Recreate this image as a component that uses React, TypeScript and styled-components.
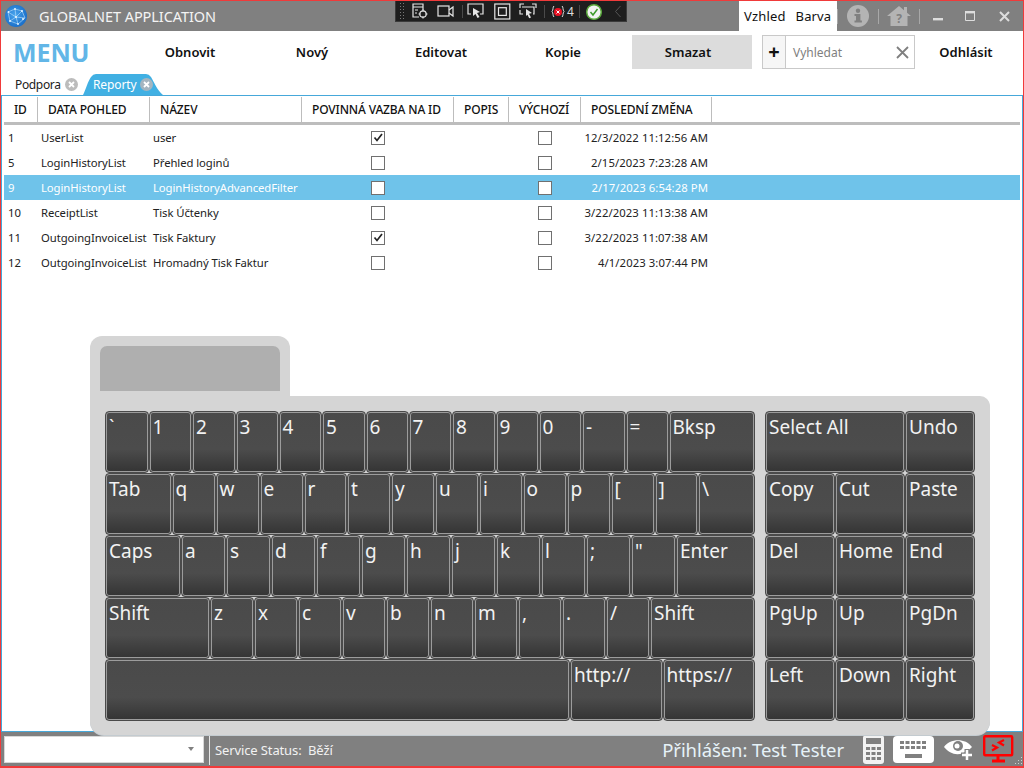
import React from "react";
import styled, { createGlobalStyle } from "styled-components";

const Global = createGlobalStyle`
  html, body { margin: 0; padding: 0; background: #fff; }
  * { box-sizing: border-box; }
  body { font-family: "Noto Sans", "Open Sans", sans-serif; }
`;
const Win = styled.div`
  position: relative; width: 1024px; height: 768px; border: 1px solid #f03a3a; border-bottom-width: 2px;
  display: flex; flex-direction: column; overflow: hidden; background: #fff; color: #111;
`;
const TitleBar = styled.div`
  height: 30px; background: #808080; display: flex; align-items: center; flex: none;
`;
const Logo = styled.svg`margin-left: 4px; flex: none;`;
const AppTitle = styled.div`
  margin-left: 12px; color: #f4f4f4; font-size: 14.5px; letter-spacing: -.07px; flex: 1; white-space: nowrap;
`;
const Theme = styled.div`
  background: #fff; height: 30px; width: 98px; display: flex; align-items: center; gap: 10px;
  padding-left: 5px; font-size: 13px; letter-spacing: .15px; color: #111; white-space: nowrap; flex: none;
`;
const Sep = styled.div`width: 1px; height: 15px; background: #a8a8a8; flex: none;`;
const TitleIcon = styled.div<{ $w: number }>`
  width: ${p => p.$w}px; height: 30px; display: flex; align-items: center; justify-content: center; flex: none;
`;
const DevBar = styled.div`
  position: absolute; left: 394px; top: 0; width: 232px; height: 21px; background: #1e1e1e;
  display: flex; align-items: center; border: 1px solid #3a3a3a; border-top: 0; color: #ddd; font-size: 12px;
`;
const DevIcon = styled.svg<{ $l: number }>`position: absolute; left: ${p => p.$l}px; top: 2px;`;
const DevText = styled.span`position: absolute; left: 171px; top: 2px; color: #ddd; font-size: 12px;`;
const DevSep = styled.i<{ $l: number }>`position: absolute; left: ${p => p.$l}px; top: 4px; width: 1px; height: 13px; background: #4a4a4a;`;
const Dots = styled.i`position: absolute; left: 3px; top: 1px; width: 6px; height: 18px;
  background-image: radial-gradient(#777 .6px, transparent .7px); background-size: 3px 3px;`;

const MenuBar = styled.div`height: 42px; display: flex; align-items: center; flex: none; padding-left: 12px;`;
const MenuTitle = styled.div`
  width: 117px; font-size: 25px; font-weight: 700; color: #62b6e7; letter-spacing: -.1px; line-height: 34px;
`;
const MenuBtn = styled.div<{ $w: number; $active?: boolean }>`
  width: ${p => p.$w}px; height: 34px; display: flex; align-items: center; justify-content: center; flex: none;
  font-size: 13px; font-weight: 600; color: #111; background: ${p => (p.$active ? "#dcdcdc" : "transparent")};
  padding-right: ${p => (p.$active ? 8 : 0)}px; margin-left: ${p => (p.$active ? 14 : 0)}px;
`;
const Search = styled.div`
  margin-left: 10px; width: 153px; height: 34px; border: 1px solid #c9c9c9; display: flex; flex: none;
`;
const Plus = styled.div`
  width: 23px; background: #f6f6f6; border-right: 1px solid #c9c9c9; font-size: 20px; font-weight: 700;
  display: flex; align-items: center; justify-content: center; line-height: 1; color: #111;
`;
const SearchText = styled.div`
  flex: 1; padding-left: 7px; font-size: 12px; color: #808080; display: flex; align-items: center; justify-content: space-between; padding-right: 5px;
`;
const TabStrip = styled.div`height: 22px; display: flex; align-items: flex-end; flex: none; padding-left: 14px;`;
const Tab = styled.div`
  display: flex; align-items: center; height: 21px; font-size: 12px; letter-spacing: -.35px; gap: 4px; color: #222; width: 67px; white-space: nowrap;
`;
const ActiveTab = styled(Tab)`
  position: relative; width: 80px; padding-left: 10px; color: #fff; z-index: 0; margin-left: 1px; gap: 3px; letter-spacing: -.1px;
  &::before { content: ""; position: absolute; inset: 0; z-index: -1; background: #41b0e3;
    clip-path: path("M0 21 C3 15 5 7 8 3 Q10 0 13 0 H63 Q66 0 68 3 C71 8 74 16 80 21 Z"); }
`;
const CloseIcon = styled.svg`flex: none;`;
const Grid = styled.div`
  flex: 1; border: 1px solid #46a8da; padding: 1px 2px 0 2px; min-height: 0;
`;
const HeaderRow = styled.div`
  height: 28px; display: flex; border-bottom: 3px solid #bdbdbd;
`;
const HeadCell = styled.div<{ $w: number }>`
  width: ${p => p.$w}px; flex: none; height: 25px; border-right: 1px solid #bdbdbd; font-size: 12px; font-weight: 500; letter-spacing: -.15px;
  display: flex; align-items: center; padding-left: 10px; color: #111; white-space: nowrap;
`;
const Row = styled.div<{ $sel?: boolean }>`
  height: 25px; display: flex; align-items: center; font-size: 11.3px; letter-spacing: -.07px;
  background: ${p => (p.$sel ? "#6fc3ea" : "transparent")}; color: ${p => (p.$sel ? "#fff" : "#222")};
`;
const Cell = styled.div<{ $w: number; $pad?: number; $center?: boolean; $right?: boolean }>`
  width: ${p => p.$w}px; flex: none; white-space: nowrap; overflow: visible;
  padding-left: ${p => p.$pad ?? 0}px;
  padding-right: ${p => (p.$right ? 1 : 0)}px;
  text-align: ${p => (p.$right ? "right" : "left")};
  letter-spacing: ${p => (p.$right ? ".08px" : "inherit")};
  display: ${p => (p.$center ? "flex" : "block")}; justify-content: center;
`;
const Check = styled.div`
  width: 14px; height: 14px; border: 1px solid #707070; background: #fff; display: flex; align-items: center; justify-content: center;
`;
const StatusBar = styled.div`
  height: 34px; background: #808080; display: flex; align-items: center; flex: none; padding-left: 3px; color: #f2f2f2;
`;
const Combo = styled.div`
  width: 200px; height: 27px; background: #fff; display: flex; align-items: center; justify-content: flex-end; padding-right: 9px; flex: none;
  border: 1px solid #d8d8d8;
`;
const Caret = styled.i`width: 0; height: 0; border: 3.5px solid transparent; border-top: 4px solid #808080; border-bottom: 0;`;
const StatusSep = styled.div`width: 1px; height: 32px; background: #e8e8e8; margin-left: 5px; flex: none;`;
const Service = styled.div`margin: 1px 0 0 5px; font-size: 13px; letter-spacing: -.12px; flex: 1; white-space: nowrap;`;
const User = styled.div`font-size: 18.5px; color: #e6f2f8; letter-spacing: -.08px; white-space: nowrap; margin-right: 19px;`;
const StatusIcons = styled.div`display: flex; align-items: center; gap: 9px; margin-right: 9px; position: relative;`;
const Grip = styled.i`position: absolute; right: -8px; bottom: -3px; width: 11px; height: 11px;
  background-image: radial-gradient(#d0d0d0 .8px, transparent .9px); background-size: 3px 3px;
  clip-path: polygon(100% 0, 100% 100%, 0 100%);`;

const Keyboard = styled.div`position: absolute; left: 89px; top: 335px; width: 900px; display: flex; flex-direction: column;`;
const KbTab = styled.div`
  width: 200px; height: 60px; background: #d5d5d5; border-radius: 12px 12px 0 0; padding: 10px 10px 5px;
`;
const KbTabInner = styled.div`height: 45px; background: #afafaf; border-radius: 7px 7px 0 0;`;
const KbBody = styled.div`
  height: 339px; background: #d5d5d5; border-radius: 0 10px 14px 14px; padding: 15px 15px 14px;
  display: flex; gap: 10px; box-shadow: 0 1px 0 #c3cbd0;
`;
const KeyBlock = styled.div<{ $w: number }>`width: ${p => p.$w}px; flex: none; display: flex; flex-direction: column;`;
const KeyRow = styled.div`height: 62px; display: flex; flex: none;`;
const Key = styled.div<{ $w: number }>`
  width: ${p => p.$w}px; flex: none; height: 62px; border: 1px solid #4a4a4a; border-radius: 4px;
  box-shadow: inset 0 0 0 1px #9c9c9c;
  background: linear-gradient(#4a4a4a 0, #4c4c4c 62%, #343434 100%);
  color: #f2f2f2; font-size: 19px; line-height: 26px; padding: 2px 0 0 3px; white-space: nowrap; overflow: hidden;
`;

const icon = { fill: "none", stroke: "#e6e6e6", strokeWidth: 1.2 };
const Box = () => (
  <svg width="10" height="9" viewBox="0 0 10 9"><path d="M1.5 4.5l2.5 3 5-6.500" fill="none" stroke="#222" strokeWidth="1.7" /></svg>
);
const TabClose = ({ c }: { c: string }) => (
  <CloseIcon width="13" height="13" viewBox="0 0 13 13">
    <circle cx="6.5" cy="6.5" r="6.500" fill={c} />
    <path d="M4 4l5 5M9 4l-5 5" stroke="#fff" strokeWidth="1.800" />
  </CloseIcon>
);
const cols = [34, 112, 152, 152, 55, 72, 131];
const heads = ["ID", "DATA POHLED", "NÁZEV", "POVINNÁ VAZBA NA ID", "POPIS", "VÝCHOZÍ", "POSLEDNÍ ZMĚNA"];
const rows = [
  ["1", "UserList", "user", true, "12/3/2022 11:12:56 AM"],
  ["5", "LoginHistoryList", "Přehled loginů", false, "2/15/2023 7:23:28 AM"],
  ["9", "LoginHistoryList", "LoginHistoryAdvancedFilter", false, "2/17/2023 6:54:28 PM"],
  ["10", "ReceiptList", "Tisk Účtenky", false, "3/22/2023 11:13:38 AM"],
  ["11", "OutgoingInvoiceList", "Tisk Faktury", true, "3/22/2023 11:07:38 AM"],
  ["12", "OutgoingInvoiceList", "Hromadný Tisk Faktur", false, "4/1/2023 3:07:44 PM"],
] as const;
type K = [string, number];
const mainKeys: K[][] = [
  [["`", 43.5], ...["1","2","3","4","5","6","7","8","9","0","-","="].map((k, i): K => [k, i % 3 === 2 ? 43 : 43.5]), ["Bksp", 86.5]],
  [["Tab", 66.5], ...["q","w","e","r","t","y","u","i","o","p","[","]"].map((k, i): K => [k, i % 4 === 3 ? 43.5 : 44]), ["\\", 56.5]],
  [["Caps", 76], ...["a","s","d","f","g","h","j","k","l",";","\""].map((k): K => [k, 45]), ["Enter", 79]],
  [["Shift", 105], ...["z","x","c","v","b","n","m",",",".","/"].map((k): K => [k, 44]), ["Shift", 105]],
  [["", 465], ["http://", 92.5], ["https://", 92.5]],
];
const sideKeys: K[][] = [
  [["Select All", 140], ["Undo", 70]],
  [["Copy", 70], ["Cut", 70], ["Paste", 70]],
  [["Del", 70], ["Home", 70], ["End", 70]],
  [["PgUp", 70], ["Up", 70], ["PgDn", 70]],
  [["Left", 70], ["Down", 70], ["Right", 70]],
];
const KeyGroup = ({ data, w }: { data: K[][]; w: number }) => (
  <KeyBlock $w={w}>
    {data.map((r, i) => (
      <KeyRow key={i}>
        {r.map(([t, kw], j) => <Key key={j} $w={kw}>{t}</Key>)}
      </KeyRow>
    ))}
  </KeyBlock>
);

export default function App() {
  return (
    <Win>
      <Global />
      <TitleBar>
        <Logo width="22" height="22" viewBox="0 0 22 22">
          <defs>
            <radialGradient id="g" cx=".45" cy=".45" r=".65"><stop offset="0" stopColor="#4aa6ee" /><stop offset="1" stopColor="#1266c4" /></radialGradient>
          </defs>
          <circle cx="11" cy="11" r="11" fill="url(#g)" />
          <path d="M3 7L10 4L17 6L20 13L13 19L5 16ZM10 4L11 12L17 6M11 12L5 16M11 12L13 19M11 12L20 13M3 7L11 12" fill="none" stroke="#bfe3fb" strokeWidth=".6" />
          <g fill="#e6f5ff"><circle cx="10" cy="4" r="1" /><circle cx="3.500" cy="7" r=".9" /><circle cx="17" cy="6" r="1" /><circle cx="11" cy="12" r="1.100" /><circle cx="5" cy="16" r="1" /><circle cx="18" cy="14" r="1" /><circle cx="13" cy="19" r=".9" /></g>
        </Logo>
        <AppTitle>GLOBALNET APPLICATION</AppTitle>
        <Theme><span>Vzhled</span><span>Barva</span></Theme>
        <Sep />
        <TitleIcon $w={40}>
          <svg width="22" height="22" viewBox="0 0 22 22"><circle cx="11" cy="11" r="11" fill="#b4b4b4" /><rect x="9" y="9" width="4.400" height="8" fill="#808080" /><rect x="7.500" y="15.500" width="7.400" height="2" fill="#808080" /><rect x="7.500" y="9" width="3" height="2" fill="#808080" /><circle cx="11" cy="5.800" r="2.200" fill="#808080" /></svg>
        </TitleIcon>
        <Sep />
        <TitleIcon $w={40}>
          <svg width="24" height="22" viewBox="0 0 24 22"><path d="M12 1L0 11h3.500v10h17V11H24L20 7.700V2h-3v3.200z" fill="#b4b4b4" /><text x="12" y="18" textAnchor="middle" fontSize="12" fontWeight="700" fill="#808080" fontFamily="Noto Sans">?</text></svg>
        </TitleIcon>
        <Sep />
        <TitleIcon $w={35}><svg width="10" height="10" viewBox="0 0 10 10"><rect y="7" width="10" height="2.400" fill="#ddd" /></svg></TitleIcon>
        <TitleIcon $w={30}><svg width="10" height="10" viewBox="0 0 10 10"><path d="M.5 1.500h9v8h-9z" fill="none" stroke="#ddd" /><rect width="10" height="2.400" fill="#ddd" /></svg></TitleIcon>
        <TitleIcon $w={38}><svg width="11" height="11" viewBox="0 0 11 11"><path d="M1 1l9 9M10 1l-9 9" stroke="#ddd" strokeWidth="2" /></svg></TitleIcon>
      </TitleBar>
      <DevBar>
        <Dots />
        <DevIcon $l={15} width="18" height="17" viewBox="0 0 18 17" {...icon}><path d="M8 14H2V1h10v6M2 4h10M4 7h3M4 10h2" /><circle cx="12" cy="11" r="3.200" /><path d="M12 6.500v2M12 13.500v2M7.500 11h2M14.500 11h2" /></DevIcon>
        <DevIcon $l={41} width="18" height="17" viewBox="0 0 18 17" {...icon}><rect x="1" y="3" width="11" height="10" /><path d="M12 7l4-3v9l-4-3" /></DevIcon>
        <DevSep $l={66} />
        <DevIcon $l={71} width="18" height="17" viewBox="0 0 18 17" {...icon}><path d="M4 11H1V1h15v10h-3" /><path d="M6 5l7 4-3 1 2.500 4-2 1-2-4-2.500 2z" fill="#e6e6e6" stroke="none" /></DevIcon>
        <DevIcon $l={98} width="17" height="17" viewBox="0 0 17 17" {...icon}><rect x=".8" y="1" width="15" height="15" /><rect x="4.500" y="4.700" width="7.800" height="7.700" /></DevIcon>
        <DevIcon $l={123} width="18" height="17" viewBox="0 0 18 17" {...icon}><path d="M1 5V1h4M13 1h4v4M4 11H1V7M3 4h12v7h-1" /><path d="M7 6l6 4-3 .8 2 3.700-1.800.8-1.800-3.600L7 13z" fill="#e6e6e6" stroke="none" /></DevIcon>
        <DevSep $l={148} />
        <DevIcon $l={155} width="14" height="17" viewBox="0 0 14 17"><circle cx="7" cy="9" r="4" fill="#e81123" /><path d="M5.500 7.500l3 3M8.500 7.500l-3 3" stroke="#fff" /><path d="M3 3C1.500 4 2.500 7 1 8.500 2.500 10 1.500 13 3 14M11 3c1.500 1 .5 4 2 5.500-1.500 1.500-.5 4.500-2 5.500" fill="none" stroke="#ddd" /></DevIcon>
        <DevText>4</DevText>
        <DevSep $l={183} />
        <DevIcon $l={190} width="16" height="17" viewBox="0 0 16 17"><circle cx="8" cy="9" r="7.300" fill="#f3f3f3" stroke="#5aa83c" strokeWidth="1.500" /><path d="M4.500 9l2.500 3 4.500-6" fill="none" stroke="#3d9a2a" strokeWidth="1.500" /></DevIcon>
        <DevIcon $l={218} width="8" height="17" viewBox="0 0 8 17"><path d="M6.500 3l-5 5.500 5 5.500" fill="none" stroke="#555" /></DevIcon>
      </DevBar>
      <MenuBar>
        <MenuTitle>MENU</MenuTitle>
        <MenuBtn $w={120}>Obnovit</MenuBtn>
        <MenuBtn $w={124}>Nový</MenuBtn>
        <MenuBtn $w={134}>Editovat</MenuBtn>
        <MenuBtn $w={110}>Kopie</MenuBtn>
        <MenuBtn $w={120} $active>Smazat</MenuBtn>
        <Search>
          <Plus>+</Plus>
          <SearchText>
            Vyhledat
            <svg width="13" height="13" viewBox="0 0 13 13"><path d="M1 1l11 11M12 1L1 12" stroke="#7f7f7f" strokeWidth="1.800" /></svg>
          </SearchText>
        </Search>
        <MenuBtn $w={102}>Odhlásit</MenuBtn>
      </MenuBar>
      <TabStrip>
        <Tab>Podpora<TabClose c="#bcbcbc" /></Tab>
        <ActiveTab>Reporty<TabClose c="#a5b5c0" /></ActiveTab>
      </TabStrip>
      <Grid>
        <HeaderRow>
          {heads.map((h, i) => <HeadCell key={h} $w={cols[i]}>{h}</HeadCell>)}
        </HeaderRow>
        {rows.map((r, i) => (
          <Row key={i} $sel={i === 2}>
            <Cell $w={37} $pad={4}>{r[0]}</Cell>
            <Cell $w={112}>{r[1]}</Cell>
            <Cell $w={149}>{r[2]}</Cell>
            <Cell $w={152} $center><Check>{r[3] && <Box />}</Check></Cell>
            <Cell $w={55} />
            <Cell $w={72} $center><Check /></Cell>
            <Cell $w={128} $right>{r[4]}</Cell>
          </Row>
        ))}
      </Grid>
      <StatusBar>
        <Combo><Caret /></Combo>
        <StatusSep />
        <Service>Service Status:&nbsp; Běží</Service>
        <User>Přihlášen: Test Tester</User>
        <StatusIcons>
          <svg width="21" height="29" viewBox="0 0 21 29"><rect width="21" height="29" rx="3" fill="#f2f2f2" /><rect x="3" y="3" width="15" height="6" fill="#808080" /><g fill="#808080"><rect x="3" y="12" width="4" height="3" /><rect x="8.500" y="12" width="4" height="3" /><rect x="14" y="12" width="4" height="3" /><rect x="3" y="17" width="4" height="3" /><rect x="8.500" y="17" width="4" height="3" /><rect x="14" y="17" width="4" height="3" /><rect x="3" y="22" width="4" height="3" /><rect x="8.500" y="22" width="4" height="3" /><rect x="14" y="22" width="4" height="3" /></g></svg>
          <svg width="41" height="27" viewBox="0 0 41 27"><rect width="41" height="27" rx="4" fill="#fff" /><g fill="#808080"><rect x="7" y="5" width="4" height="3" /><rect x="12.500" y="5" width="4" height="3" /><rect x="18" y="5" width="4" height="3" /><rect x="23.500" y="5" width="4" height="3" /><rect x="29" y="5" width="4" height="3" /><rect x="7" y="10" width="4" height="3" /><rect x="12.500" y="10" width="4" height="3" /><rect x="18" y="10" width="4" height="3" /><rect x="23.500" y="10" width="4" height="3" /><rect x="29" y="10" width="4" height="3" /><rect x="12" y="18" width="17" height="4" /></g></svg>
          <svg width="31" height="26" viewBox="0 0 31 26"><path d="M1 11C6 3 22 1 29 11 26 14 24 16 20 17 13 20 6 17 1 11Z" fill="#fff" /><circle cx="15" cy="10" r="5" fill="#808080" /><circle cx="14" cy="10" r="2.500" fill="#fff" /><path d="M24 13v12M18 19h12" stroke="#808080" strokeWidth="5" /><path d="M24 14v10M19 19h10" stroke="#fff" strokeWidth="2.500" /></svg>
          <svg width="31" height="29" viewBox="0 0 31 29"><rect x="1.200" y="1.200" width="28" height="19" rx="1" fill="none" stroke="#f00" strokeWidth="2.400" /><path d="M15 21v4M9 26h13" stroke="#f00" strokeWidth="3" /><path d="M9 10l5 2.500-5 3M21 5l-5 2.500 5 3" fill="none" stroke="#f00" strokeWidth="2.200" /></svg>
          <Grip />
        </StatusIcons>
      </StatusBar>
      <Keyboard>
        <KbTab><KbTabInner /></KbTab>
        <KbBody>
          <KeyGroup data={mainKeys} w={650} />
          <KeyGroup data={sideKeys} w={210} />
        </KbBody>
      </Keyboard>
    </Win>
  );
}
